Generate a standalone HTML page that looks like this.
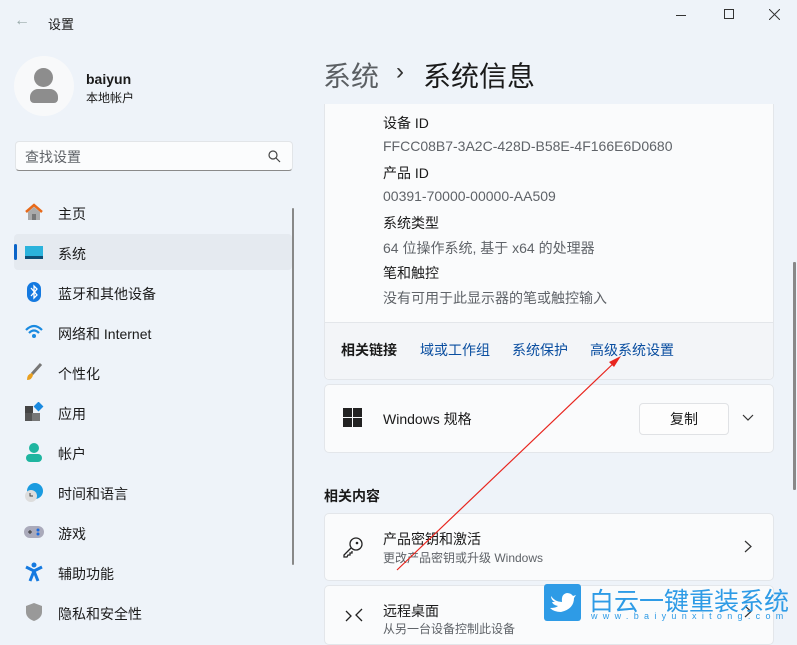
<!DOCTYPE html>
<html><head><meta charset="utf-8"><style>
*{margin:0;padding:0;box-sizing:border-box}
body{width:797px;height:627px;overflow:hidden;background:#eef3f9;font-family:"Liberation Sans","Noto Sans CJK SC",sans-serif;color:#1a1a1a;position:relative;font-size:14px}
.a{position:absolute;white-space:nowrap}
.card{position:absolute;background:#fafbfc;border:1px solid #e3e6ea;border-radius:5px}
.nav{position:absolute;left:58px;font-size:14px}
.ic{position:absolute;left:24px;width:20px;height:20px}
.g{color:#5f6368}
.lnk{color:#0a4ea0}
</style></head><body>
<div class="a" style="left:14px;top:12px;color:#9aa;font-size:16px">←</div>
<div class="a" style="left:48px;top:14px;font-size:13px">设置</div>
<div class="a" style="left:676px;top:15px;width:10px;height:1px;background:#333"></div>
<div class="a" style="left:724px;top:9px;width:10px;height:10px;border:1px solid #333"></div>
<svg class="a" style="left:769px;top:9px" width="11" height="11"><path d="M0 0L11 11M11 0L0 11" stroke="#333" stroke-width="1"/></svg>
<div class="a" style="left:14px;top:56px;width:60px;height:60px;border-radius:50%;background:#f8f9fa"></div>
<div class="a" style="left:34px;top:68px;width:19px;height:19px;border-radius:50%;background:#8d8d8d"></div>
<div class="a" style="left:30px;top:89px;width:28px;height:14px;border-radius:8px 8px 4px 4px;background:#8d8d8d"></div>
<div class="a" style="left:86px;top:71px;font-size:14px;font-weight:bold">baiyun</div>
<div class="a" style="left:86px;top:89px;font-size:12px">本地帐户</div>
<div class="a" style="left:15px;top:141px;width:278px;height:30px;background:#fbfcfd;border:1px solid #e2e5e8;border-bottom:1px solid #8a8a8a;border-radius:4px"></div>
<div class="a g" style="left:25px;top:147px;font-size:14px">查找设置</div>
<svg class="a" style="left:268px;top:150px" width="13" height="13"><circle cx="5" cy="5" r="4" fill="none" stroke="#444" stroke-width="1.2"/><line x1="8" y1="8" x2="12" y2="12" stroke="#444" stroke-width="1.2"/></svg>
<div class="a" style="left:292px;top:208px;width:2px;height:357px;background:#888;border-radius:1px"></div>
<div class="a" style="left:14px;top:234px;width:278px;height:36px;background:#e5eaf0;border-radius:4px"></div>
<div class="a" style="left:14px;top:244px;width:3px;height:16px;background:#0a64c8;border-radius:2px"></div>
<svg class="ic" style="top:202px" viewBox="0 0 20 20"><path d="M2 10L10 3L18 10" fill="none" stroke="#e86a1a" stroke-width="2.5"/><path d="M4 10V18H16V10L10 5Z" fill="#aaa"/><rect x="8" y="12" width="4" height="6" fill="#777"/></svg>
<svg class="ic" style="top:243px" viewBox="0 0 20 20"><rect x="1" y="3" width="18" height="13" fill="#2bb3dc"/><rect x="1" y="13" width="18" height="3" fill="#0d4e75"/></svg>
<svg class="ic" style="top:282px" viewBox="0 0 20 20"><rect x="3" y="0" width="14" height="20" rx="7" fill="#1479e0"/><path d="M7 6L13 13L10 16V4L13 7L7 14" fill="none" stroke="#fff" stroke-width="1.3"/></svg>
<svg class="ic" style="top:322px" viewBox="0 0 20 20"><path d="M2 8Q10 0 18 8" fill="none" stroke="#1a8ae0" stroke-width="2.2"/><path d="M5 11Q10 6 15 11" fill="none" stroke="#1a8ae0" stroke-width="2.2"/><circle cx="10" cy="14" r="2" fill="#1a8ae0"/></svg>
<svg class="ic" style="top:362px" viewBox="0 0 20 20"><path d="M17 2L8 12" stroke="#777" stroke-width="3"/><path d="M8 11Q3 12 3 18Q8 18 9 13Z" fill="#e9a020"/></svg>
<svg class="ic" style="top:402px" viewBox="0 0 20 20"><rect x="1" y="4" width="8" height="8" fill="#444"/><rect x="1" y="11" width="8" height="8" fill="#555"/><rect x="8" y="11" width="8" height="8" fill="#777"/><rect x="11" y="1" width="7" height="7" fill="#1a8ae0" transform="rotate(45 14.5 4.5)"/></svg>
<svg class="ic" style="top:442px" viewBox="0 0 20 20"><circle cx="10" cy="6" r="5" fill="#1fb5a0"/><rect x="2" y="12" width="16" height="8" rx="4" fill="#1fb5a0"/></svg>
<svg class="ic" style="top:482px" viewBox="0 0 20 20"><circle cx="11" cy="9" r="8" fill="#1a9be0"/><circle cx="7" cy="14" r="6" fill="#ddd"/><path d="M6 11V14H9" fill="none" stroke="#444"/></svg>
<svg class="ic" style="top:522px" viewBox="0 0 20 20"><rect x="0" y="4" width="20" height="12" rx="6" fill="#aab"/><circle cx="14" cy="8" r="1.5" fill="#1a6ae0"/><circle cx="14" cy="12" r="1.5" fill="#1a6ae0"/><path d="M4 10H8M6 8V12" stroke="#333"/></svg>
<svg class="ic" style="top:562px" viewBox="0 0 20 20"><circle cx="10" cy="3" r="2.5" fill="#1479e0"/><path d="M2 5L10 9L18 5M10 9L6 19M10 9L14 19" fill="none" stroke="#1479e0" stroke-width="3"/></svg>
<svg class="ic" style="top:602px" viewBox="0 0 20 20"><path d="M10 1L18 4V10Q18 16 10 19Q2 16 2 10V4Z" fill="#999"/></svg>
<div class="nav" style="top:204px">主页</div>
<div class="nav" style="top:244px">系统</div>
<div class="nav" style="top:284px">蓝牙和其他设备</div>
<div class="nav" style="top:324px">网络和 Internet</div>
<div class="nav" style="top:364px">个性化</div>
<div class="nav" style="top:404px">应用</div>
<div class="nav" style="top:444px">帐户</div>
<div class="nav" style="top:484px">时间和语言</div>
<div class="nav" style="top:524px">游戏</div>
<div class="nav" style="top:564px">辅助功能</div>
<div class="nav" style="top:604px">隐私和安全性</div>

<div class="a" style="left:323px;top:55px;font-size:28px;color:#5b5f63">系统</div>
<div class="a" style="left:396px;top:58px;font-size:24px;color:#333">›</div>
<div class="a" style="left:423px;top:55px;font-size:28px">系统信息</div>

<div class="card" style="left:324px;top:104px;width:450px;height:276px;border-top:none;border-radius:0 0 5px 5px"></div>
<div class="a" style="left:325px;top:322px;width:448px;height:57px;background:#f3f5f8;border-top:1px solid #e3e6ea;border-radius:0 0 5px 5px"></div>
<div class="a" style="left:383px;top:113px">设备 ID</div>
<div class="a g" style="left:383px;top:138px">FFCC08B7-3A2C-428D-B58E-4F166E6D0680</div>
<div class="a" style="left:383px;top:163px">产品 ID</div>
<div class="a g" style="left:383px;top:188px">00391-70000-00000-AA509</div>
<div class="a" style="left:383px;top:213px">系统类型</div>
<div class="a g" style="left:383px;top:238px">64 位操作系统, 基于 x64 的处理器</div>
<div class="a" style="left:383px;top:263px">笔和触控</div>
<div class="a g" style="left:383px;top:288px">没有可用于此显示器的笔或触控输入</div>
<div class="a" style="left:341px;top:340px;font-weight:bold">相关链接</div>
<div class="a lnk" style="left:420px;top:340px">域或工作组</div>
<div class="a lnk" style="left:512px;top:340px">系统保护</div>
<div class="a lnk" style="left:590px;top:340px">高级系统设置</div>

<div class="card" style="left:324px;top:384px;width:450px;height:69px"></div>
<svg class="a" style="left:343px;top:408px" width="20" height="20"><rect x="0" y="0" width="9" height="9" fill="#222"/><rect x="10" y="0" width="9" height="9" fill="#222"/><rect x="0" y="10" width="9" height="9" fill="#222"/><rect x="10" y="10" width="9" height="9" fill="#222"/></svg>
<div class="a" style="left:383px;top:409px">Windows 规格</div>
<div class="a" style="left:639px;top:403px;width:90px;height:32px;background:#fdfdfd;border:1px solid #e0e2e5;border-radius:4px;text-align:center;line-height:30px">复制</div>
<svg class="a" style="left:742px;top:414px" width="12" height="8"><path d="M1 1L6 6L11 1" fill="none" stroke="#333" stroke-width="1.2"/></svg>

<div class="a" style="left:324px;top:486px;font-size:14px;font-weight:bold">相关内容</div>
<div class="card" style="left:324px;top:513px;width:450px;height:68px"></div>
<svg class="a" style="left:342px;top:536px" width="22" height="22" viewBox="0 0 22 22"><circle cx="14" cy="8" r="6" fill="none" stroke="#222" stroke-width="1.3"/><circle cx="15" cy="7" r="1.3" fill="#222"/><path d="M9 12L2 19V21H5L6 19H8V17H10L10 15" fill="none" stroke="#222" stroke-width="1.3"/></svg>
<div class="a" style="left:383px;top:529px">产品密钥和激活</div>
<div class="a g" style="left:383px;top:549px;font-size:12px">更改产品密钥或升级 Windows</div>
<svg class="a" style="left:744px;top:540px" width="8" height="13"><path d="M1 1L7 6.5L1 12" fill="none" stroke="#333" stroke-width="1.2"/></svg>
<div class="card" style="left:324px;top:585px;width:450px;height:60px"></div>
<svg class="a" style="left:345px;top:608px" width="18" height="19"><path d="M1 3L6 8L1 13M17 1L11 7L17 13" fill="none" stroke="#222" stroke-width="1.3"/></svg>
<div class="a" style="left:383px;top:601px">远程桌面</div>
<div class="a g" style="left:383px;top:620px;font-size:12px">从另一台设备控制此设备</div>
<svg class="a" style="left:744px;top:605px" width="8" height="13"><path d="M1 1L7 6.5L1 12" fill="none" stroke="#333" stroke-width="1.2"/></svg>
<div class="a" style="left:793px;top:262px;width:3px;height:228px;background:#888;border-radius:1px"></div>

<svg class="a" style="left:0;top:0" width="797" height="627"><line x1="397" y1="570" x2="617" y2="360" stroke="#e8251e" stroke-width="1.2"/><path d="M621 356L609 362L614 367Z" fill="#e8251e"/></svg>

<div class="a" style="left:544px;top:584px;width:37px;height:37px;background:#2e9be6;border-radius:3px"></div>
<svg class="a" style="left:549px;top:590px" width="27" height="24" viewBox="0 0 27 24"><path d="M2 6Q6 12 13 12Q12 4 18 3Q22 3 24 6L27 5L25 8Q25 19 12 22Q5 22 1 18Q7 18 9 16Q4 15 3 12L6 12Q2 10 2 6Z" fill="#fff"/></svg>
<div class="a" style="left:589px;top:582px;font-size:25px;color:#2e9be6;letter-spacing:0">白云一键重装系统</div>
<div class="a" style="left:591px;top:611px;font-size:9px;color:#2e9be6;letter-spacing:5.3px">www.baiyunxitong.com</div>
</body></html>
